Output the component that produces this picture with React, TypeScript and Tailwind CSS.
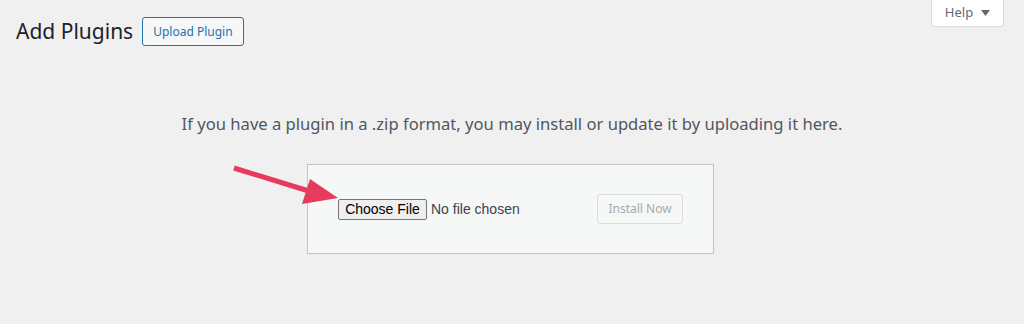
export default function App() {
  return (
    <div
      className="relative w-[1024px] h-[324px] bg-[#f0f0f1] text-[#3c434a] overflow-hidden"
      style={{ fontFamily: '"Noto Sans", "Open Sans", sans-serif' }}
    >
      {/* Top bar: title + help tab */}
      <div className="flex items-start justify-between">
        <div className="flex items-center pl-4 pt-[17px]">
          <h1 className="text-[21px] leading-[29px] font-normal text-[#1d2327]">
            Add Plugins
          </h1>
          <button className="ml-[9px] h-[29px] px-[10px] border border-[#2271b1] rounded-[3px] bg-[#f6f7f7] text-[#2271b1] text-[12px] leading-none">
            Upload Plugin
          </button>
        </div>
        <div className="mr-[20px] w-[73px] h-[27px] flex items-center justify-center gap-[8px] bg-white border border-t-0 border-[#dcdcde] rounded-b-[4px] text-[13px] text-[#646970]">
          <span>Help</span>
          <svg width="9" height="6" viewBox="0 0 9 6">
            <path d="M0 0 H9 L4.5 6 Z" fill="#646970" />
          </svg>
        </div>
      </div>

      {/* Upload help */}
      <p className="mt-[65px] text-center text-[16.6px] leading-[25px] text-[#50575e]">
        If you have a plugin in a .zip format, you may install or update it by uploading it here.
      </p>

      <div className="mt-[28px] flex justify-center">
        <form className="ml-[-3px] w-[407px] h-[90px] px-[30px] flex items-center justify-between bg-[#f6f7f7] border border-[#c3c4c7]">
          <div
            className="flex items-center text-[14px]"
            style={{ fontFamily: '"Liberation Sans", Arial, sans-serif' }}
          >
            <span className="w-[89px] h-[21px] flex items-center justify-center bg-[#efefef] border border-[#767676] rounded-[2px] text-black">
              Choose File
            </span>
            <span className="ml-[4px] text-[#3c434a]">No file chosen</span>
          </div>
          <button
            type="button"
            disabled
            className="w-[86px] h-[30px] border border-[#dcdcde] rounded-[3px] bg-[#f6f7f7] text-[#a7aaad] text-[12px]"
          >
            Install Now
          </button>
        </form>
      </div>

      {/* Annotation arrow */}
      <svg
        className="absolute left-0 top-0 pointer-events-none"
        width="1024"
        height="324"
        viewBox="0 0 1024 324"
      >
        <line x1="234" y1="168" x2="312" y2="192" stroke="#e8395e" strokeWidth="5" />
        <polygon points="310,179 338,198 302,204" fill="#e8395e" />
      </svg>
    </div>
  );
}
